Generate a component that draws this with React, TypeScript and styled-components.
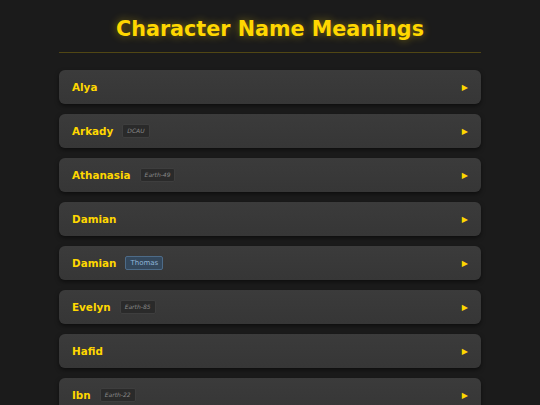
import styled, { createGlobalStyle } from 'styled-components';

const GlobalStyle = createGlobalStyle`
  html, body {
    margin: 0;
    padding: 0;
    background: #1b1b1b;
  }
  body {
    font-family: 'DejaVu Sans', Verdana, sans-serif;
    color: #ddd;
  }
`;

const Page = styled.div`
  min-height: 100vh;
  background: #1b1b1b;
  padding: 17px 59px 0;
  box-sizing: border-box;
`;

const Title = styled.h1`
  margin: 0;
  padding-bottom: 11px;
  text-align: center;
  font-size: 20.7px;
  font-weight: bold;
  color: #ffd700;
  text-shadow: 0 0 8px rgba(255, 215, 0, 0.45);
  border-bottom: 1px solid rgba(255, 215, 0, 0.24);
`;

const List = styled.div`
  display: flex;
  flex-direction: column;
  gap: 10px;
  margin-top: 17px;
`;

const Card = styled.div`
  display: flex;
  align-items: center;
  height: 34px;
  padding: 0 12px 0 13px;
  border-radius: 6px;
  background: linear-gradient(180deg, #3b3b3b 0%, #363636 100%);
  box-shadow: 0 2px 4px rgba(0, 0, 0, 0.5);
`;

const Name = styled.span`
  font-size: 10.4px;
  font-weight: bold;
  color: #ffd700;
`;

const Badge = styled.span<{ $blue?: boolean }>`
  margin-left: 9px;
  padding: ${p => (p.$blue ? '2px 4px' : '3px 4px')};
  font-size: ${p => (p.$blue ? '7px' : '6px')};
  line-height: 1.15;
  border-radius: 2px;
  font-style: ${p => (p.$blue ? 'normal' : 'italic')};
  color: ${p => (p.$blue ? '#8fb4d8' : '#888')};
  background: ${p => (p.$blue ? '#34485c' : '#2a2a2a')};
  border: 1px solid ${p => (p.$blue ? '#4d6b88' : '#3e3e3e')};
`;

const Arrow = styled.span`
  margin-left: auto;
  margin-right: 1px;
  font-size: 8px;
  color: #ffd700;
`;

const characters: { name: string; tag?: string; blue?: boolean }[] = [
  { name: 'Alya' },
  { name: 'Arkady', tag: 'DCAU' },
  { name: 'Athanasia', tag: 'Earth-49' },
  { name: 'Damian' },
  { name: 'Damian', tag: 'Thomas', blue: true },
  { name: 'Evelyn', tag: 'Earth-85' },
  { name: 'Hafid' },
  { name: 'Ibn', tag: 'Earth-22' },
];

export default function App() {
  return (
    <Page>
      <GlobalStyle />
      <Title>Character Name Meanings</Title>
      <List>
        {characters.map((c, i) => (
          <Card key={i}>
            <Name>{c.name}</Name>
            {c.tag && <Badge $blue={c.blue}>{c.tag}</Badge>}
            <Arrow>▶</Arrow>
          </Card>
        ))}
      </List>
    </Page>
  );
}
